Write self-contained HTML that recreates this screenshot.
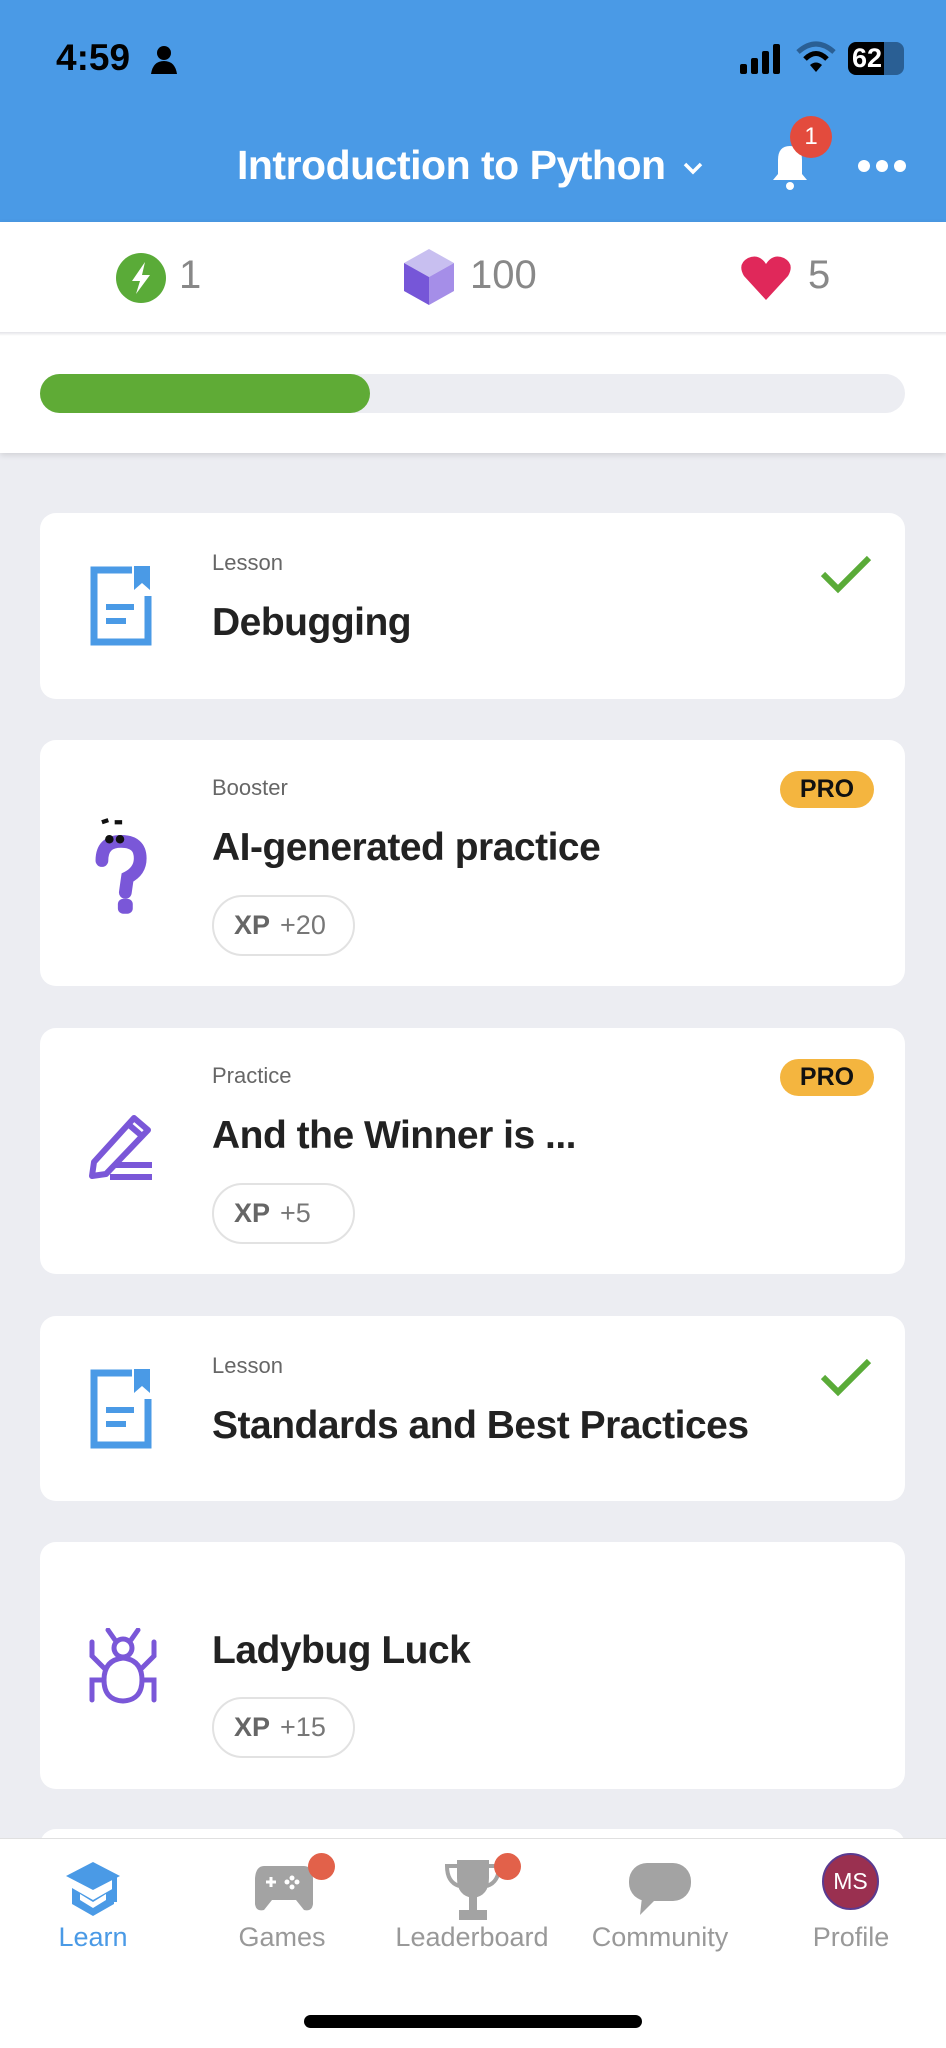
<!DOCTYPE html>
<html><head><meta charset="utf-8"><style>
*{margin:0;padding:0;box-sizing:border-box}
body{width:946px;height:2048px;background:#ecedf2;font-family:"Liberation Sans",sans-serif;position:relative;overflow:hidden}
.abs{position:absolute}
.card{position:absolute;left:40px;width:865px;background:#fff;border-radius:16px}
.lbl{position:absolute;left:172px;font-size:22px;color:#666}
.ttl{position:absolute;left:172px;font-size:39px;font-weight:bold;color:#222;letter-spacing:-0.5px}
.pill{position:absolute;left:172px;width:143px;height:61px;border:2px solid #e2e2e2;border-radius:31px;font-size:27px;color:#777;line-height:57px;padding-left:20px}
.pill b{color:#666;margin-right:10px}
.pro{position:absolute;left:740px;width:94px;height:37px;background:#f4b53f;border-radius:19px;font-size:25px;font-weight:bold;color:#111;text-align:center;line-height:37px}
.tab{position:absolute;top:1922px;font-size:27px;color:#999;text-align:center;width:180px}
</style></head><body>
<div class="abs" style="left:0;top:0;width:946px;height:222px;background:#4a9ae6"></div>
<div class="abs" style="left:56px;top:37px;font-size:37px;font-weight:bold;color:#000">4:59</div>
<svg class="abs" style="left:150px;top:44px" width="28" height="30" viewBox="0 0 28 30"><circle cx="14" cy="9" r="7" fill="#000"/><path d="M1 30 Q3 17 14 17 Q25 17 27 30Z" fill="#000"/></svg>
<svg class="abs" style="left:738px;top:42px" width="48" height="32"><rect x="2" y="22" width="7" height="10" rx="2"/><rect x="13" y="16" width="7" height="16" rx="2"/><rect x="24" y="9" width="7" height="23" rx="2"/><rect x="35" y="2" width="7" height="30" rx="2"/></svg>
<svg class="abs" style="left:796px;top:40px" width="40" height="34" viewBox="0 0 40 34"><path d="M2 12 Q20 -4 38 12" stroke="#2a5f94" stroke-width="5" fill="none"/><path d="M9 19 Q20 8 31 19" stroke="#000" stroke-width="5" fill="none"/><path d="M14 25 L20 32 L26 25 Q20 20 14 25Z" fill="#000"/></svg>
<div class="abs" style="left:848px;top:42px;width:54px;height:33px;background:#000;border-radius:8px;color:#fff;font-weight:bold;font-size:27px;line-height:33px;padding-left:4px">62</div>
<div class="abs" style="left:884px;top:42px;width:20px;height:33px;background:#2a5f94;border-radius:0 8px 8px 0"></div>
<div class="abs" style="left:237px;top:142px;font-size:41px;font-weight:bold;color:#fff;letter-spacing:-0.5px">Introduction to Python</div>
<svg class="abs" style="left:682px;top:160px" width="22" height="16"><path d="M3 4 L11 12 L19 4" stroke="#fff" stroke-width="3.5" fill="none"/></svg>
<svg class="abs" style="left:770px;top:142px" width="40" height="48" viewBox="0 0 40 48"><path d="M20 4 Q8 4 8 18 L8 32 L3 38 L37 38 L32 32 L32 18 Q32 4 20 4Z" fill="#fff"/><circle cx="20" cy="44" r="4" fill="#fff"/></svg>
<div class="abs" style="left:790px;top:116px;width:42px;height:42px;border-radius:50%;background:#e34b3d;color:#fff;font-size:24px;text-align:center;line-height:42px">1</div>
<div class="abs" style="left:858px;top:160px;width:12px;height:12px;border-radius:50%;background:#fff"></div>
<div class="abs" style="left:876px;top:160px;width:12px;height:12px;border-radius:50%;background:#fff"></div>
<div class="abs" style="left:894px;top:160px;width:12px;height:12px;border-radius:50%;background:#fff"></div>

<div class="abs" style="left:0;top:222px;width:946px;height:231px;background:#fff;box-shadow:0 2px 6px rgba(0,0,0,.12)"></div>
<div class="abs" style="left:0;top:332px;width:946px;height:4px;background:linear-gradient(#e4e4e8,#fff)"></div>
<svg class="abs" style="left:115px;top:252px" width="52" height="52" viewBox="0 0 52 52"><circle cx="26" cy="26" r="25" fill="#5aab38"/><path d="M30 10 L17 29 L25 29 L21 42 L35 23 L27 23Z" fill="#fff"/></svg>
<div class="abs" style="left:179px;top:253px;font-size:40px;color:#888">1</div>
<svg class="abs" style="left:402px;top:247px" width="54" height="60" viewBox="0 0 54 60"><path d="M27 2 L52 16 L27 30 L2 16Z" fill="#c8bff0"/><path d="M2 16 L27 30 L27 58 L2 44Z" fill="#7656d8"/><path d="M52 16 L27 30 L27 58 L52 44Z" fill="#a58ee8"/></svg>
<div class="abs" style="left:470px;top:253px;font-size:40px;color:#888">100</div>
<svg class="abs" style="left:740px;top:254px" width="52" height="48" viewBox="0 0 52 48"><path d="M26 46 L4 22 Q-3 10 8 4 Q19 -1 26 10 Q33 -1 44 4 Q55 10 48 22Z" fill="#e0285a"/></svg>
<div class="abs" style="left:808px;top:253px;font-size:40px;color:#888">5</div>
<div class="abs" style="left:40px;top:374px;width:865px;height:39px;background:#ecedf2;border-radius:20px"></div>
<div class="abs" style="left:40px;top:374px;width:330px;height:39px;background:#5fab36;border-radius:20px"></div>

<!-- card1 -->
<div class="card" style="top:513px;height:186px">
<svg class="abs" style="left:50px;top:53px" width="63" height="80" viewBox="0 0 63 80"><path d="M42 4 L4 4 L4 76 L58 76 L58 30" stroke="#4a9ae6" stroke-width="7" fill="none"/><path d="M44 0 L60 0 L60 24 L52 17 L44 24Z" fill="#4a9ae6"/><rect x="16" y="38" width="28" height="6" fill="#4a9ae6"/><rect x="16" y="52" width="20" height="6" fill="#4a9ae6"/></svg>
<div class="lbl" style="top:37px">Lesson</div>
<div class="ttl" style="top:88px">Debugging</div>
<svg class="abs" style="left:780px;top:41px" width="52" height="40"><path d="M3 20 L18 35 L49 4" stroke="#5aab38" stroke-width="6" fill="none"/></svg>
</div>
<!-- card2 -->
<div class="card" style="top:740px;height:246px">
<svg class="abs" style="left:52px;top:78px" width="56" height="100" viewBox="0 0 50 94"><path d="M8 4 L14 2" stroke="#111" stroke-width="4"/><path d="M20 4 L27 4" stroke="#111" stroke-width="4"/><path d="M8 40 Q8 22 26 22 Q44 22 44 38 Q44 50 32 56 L30 70" stroke="#7a57d8" stroke-width="12" fill="none" stroke-linecap="round"/><circle cx="15" cy="20" r="4" fill="#111"/><circle cx="25" cy="20" r="4" fill="#111"/><rect x="23" y="76" width="14" height="14" rx="5" fill="#7a57d8"/></svg>
<div class="lbl" style="top:35px">Booster</div>
<div class="ttl" style="top:86px">AI-generated practice</div>
<div class="pill" style="top:155px"><b>XP</b>+20</div>
<div class="pro" style="top:31px">PRO</div>
</div>
<!-- card3 -->
<div class="card" style="top:1028px;height:246px">
<svg class="abs" style="left:46px;top:86px" width="68" height="70" viewBox="0 0 68 70"><path d="M48 4 L62 16 L20 60 L6 62 L8 48Z" stroke="#7a57d8" stroke-width="6" fill="none" stroke-linejoin="round"/><path d="M42 10 L56 22" stroke="#7a57d8" stroke-width="6"/><rect x="30" y="48" width="36" height="6" fill="#7a57d8"/><rect x="24" y="60" width="42" height="6" fill="#7a57d8"/></svg>
<div class="lbl" style="top:35px">Practice</div>
<div class="ttl" style="top:86px">And the Winner is ...</div>
<div class="pill" style="top:155px"><b>XP</b>+5</div>
<div class="pro" style="top:31px">PRO</div>
</div>
<!-- card4 -->
<div class="card" style="top:1316px;height:185px">
<svg class="abs" style="left:50px;top:53px" width="63" height="80" viewBox="0 0 63 80"><path d="M42 4 L4 4 L4 76 L58 76 L58 30" stroke="#4a9ae6" stroke-width="7" fill="none"/><path d="M44 0 L60 0 L60 24 L52 17 L44 24Z" fill="#4a9ae6"/><rect x="16" y="38" width="28" height="6" fill="#4a9ae6"/><rect x="16" y="52" width="20" height="6" fill="#4a9ae6"/></svg>
<div class="lbl" style="top:37px">Lesson</div>
<div class="ttl" style="top:88px">Standards and Best Practices</div>
<svg class="abs" style="left:780px;top:41px" width="52" height="40"><path d="M3 20 L18 35 L49 4" stroke="#5aab38" stroke-width="6" fill="none"/></svg>
</div>
<!-- card5 -->
<div class="card" style="top:1542px;height:247px">
<svg class="abs" style="left:48px;top:86px" width="70" height="76" viewBox="0 0 70 76"><g stroke="#7a57d8" stroke-width="5" fill="none" stroke-linecap="round"><path d="M35 30 Q16 32 16 52 Q16 72 35 73 Q54 72 54 52 Q54 32 35 30Z"/><circle cx="35" cy="20" r="9"/><path d="M27 12 L20 2 M43 12 L50 2"/><path d="M16 40 L4 28 L4 14 M54 40 L66 28 L66 14"/><path d="M16 52 L4 52 L4 72 M54 52 L66 52 L66 72"/></g></svg>
<div class="ttl" style="top:87px">Ladybug Luck</div>
<div class="pill" style="top:155px"><b>XP</b>+15</div>
</div>
<div class="card" style="top:1829px;height:60px"></div>

<!-- tab bar -->
<div class="abs" style="left:0;top:1838px;width:946px;height:210px;background:#fff;border-top:1px solid #e0e0e0"></div>
<svg class="abs" style="left:64px;top:1860px" width="58" height="56" viewBox="0 0 58 56"><path d="M29 2 L56 16 L29 30 L2 16Z" fill="#4a9ae6"/><path d="M8 28 L29 40 L50 28 L50 44 L29 56 L8 44Z" fill="#4a9ae6"/><path d="M16 34 L29 42 L42 34 L42 40 L29 48 L16 40Z" fill="#fff"/><rect x="48" y="16" width="5" height="26" fill="#4a9ae6"/></svg>
<div class="tab" style="left:3px;color:#4a9ae6">Learn</div>
<svg class="abs" style="left:254px;top:1864px" width="60" height="48" viewBox="0 0 60 48"><path d="M10 2 L50 2 Q58 2 59 14 L59 40 Q58 48 50 46 L42 36 L18 36 L10 46 Q2 48 1 40 L1 14 Q2 2 10 2Z" fill="#a3a3a3"/><path d="M12 18 L22 18 M17 13 L17 23" stroke="#fff" stroke-width="3"/><circle cx="38" cy="14" r="2.5" fill="#fff"/><circle cx="38" cy="23" r="2.5" fill="#fff"/><circle cx="33" cy="18" r="2.5" fill="#fff"/><circle cx="43" cy="18" r="2.5" fill="#fff"/></svg>
<div class="abs" style="left:308px;top:1853px;width:27px;height:27px;border-radius:50%;background:#e2614a"></div>
<div class="tab" style="left:192px">Games</div>
<svg class="abs" style="left:443px;top:1858px" width="60" height="64" viewBox="0 0 60 64"><path d="M14 2 L46 2 L46 20 Q46 38 30 40 Q14 38 14 20Z" fill="#a3a3a3"/><path d="M14 8 L4 8 Q4 24 16 28 M46 8 L56 8 Q56 24 44 28" stroke="#a3a3a3" stroke-width="4" fill="none"/><rect x="26" y="38" width="8" height="14" fill="#a3a3a3"/><rect x="16" y="52" width="28" height="10" fill="#a3a3a3"/></svg>
<div class="abs" style="left:494px;top:1853px;width:27px;height:27px;border-radius:50%;background:#e2614a"></div>
<div class="tab" style="left:382px">Leaderboard</div>
<svg class="abs" style="left:628px;top:1861px" width="64" height="56" viewBox="0 0 64 56"><rect x="1" y="2" width="62" height="38" rx="18" fill="#a3a3a3"/><path d="M14 36 L12 54 L28 38Z" fill="#a3a3a3"/></svg>
<div class="tab" style="left:570px">Community</div>
<div class="abs" style="left:822px;top:1853px;width:57px;height:57px;border-radius:50%;background:#9a3050;border:2px solid #5a3a90;color:#fff;font-size:23px;text-align:center;line-height:53px">MS</div>
<div class="tab" style="left:761px">Profile</div>
<div class="abs" style="left:304px;top:2015px;width:338px;height:13px;border-radius:7px;background:#000"></div>
</body></html>
